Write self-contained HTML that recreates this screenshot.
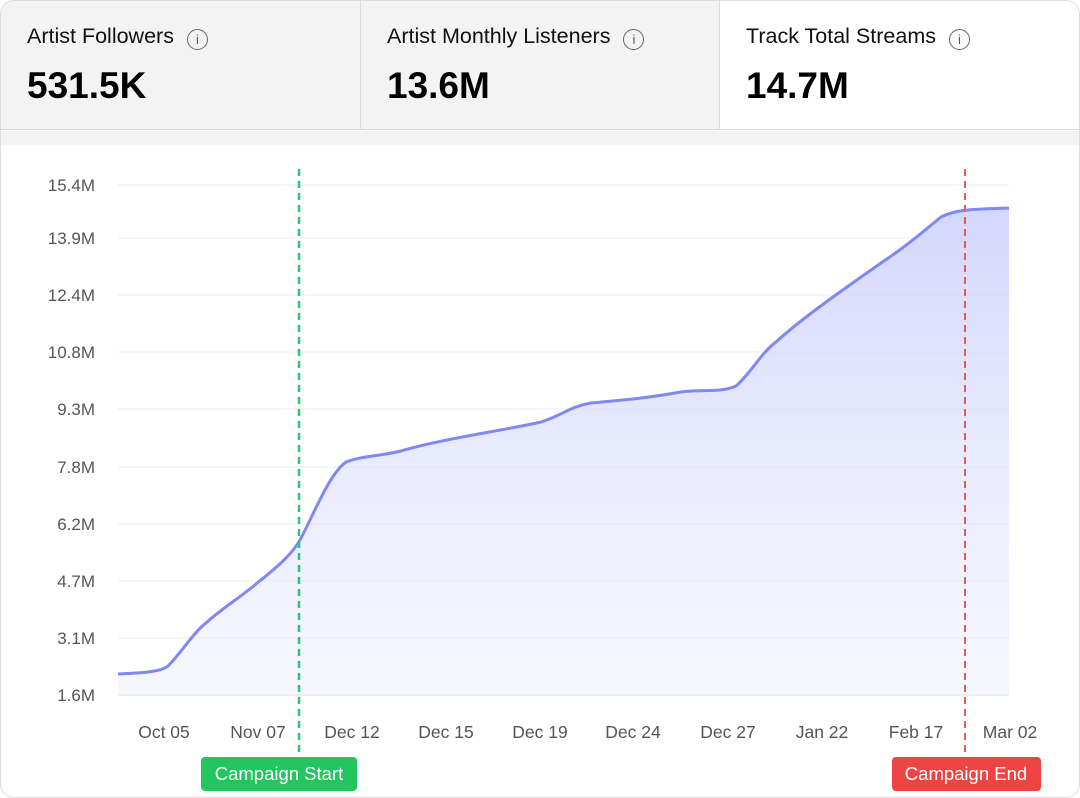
<!DOCTYPE html><html><head><style>
body{margin:0;width:1080px;height:798px;background:#fff;font-family:"Liberation Sans",sans-serif;overflow:hidden}
.card{position:absolute;left:0;top:0;width:1078px;height:796px;border:1px solid #ddd;border-radius:14px;overflow:hidden;background:#fff}
.tab{position:absolute;top:0;height:129px;background:#f3f3f3;border-right:1px solid #dcdcdc;border-bottom:1px solid #dcdcdc;box-sizing:border-box}
.tab .t{position:absolute;left:26px;top:23px;font-size:21.5px;color:#111}
.tab .t span{display:inline-block;width:19px;height:19px;border:1.5px solid #666;border-radius:50%;font-size:13px;text-align:center;line-height:19px;color:#555;margin-left:13px;vertical-align:-1px;font-family:"Liberation Sans",sans-serif}
.tab .v{position:absolute;left:26px;top:64px;font-size:37px;font-weight:bold;color:#000}
</style></head><body><div class="card">
<div class="tab" style="left:0;width:360px"><div class="t">Artist Followers<span>i</span></div><div class="v">531.5K</div></div>
<div class="tab" style="left:360px;width:359px"><div class="t">Artist Monthly Listeners<span>i</span></div><div class="v">13.6M</div></div>
<div class="tab" style="left:719px;width:361px;background:#fff;border-right:none"><div class="t">Track Total Streams<span>i</span></div><div class="v">14.7M</div></div>
<div style="position:absolute;left:0;top:130px;width:1080px;height:14px;background:#f3f3f3"></div>
<svg width="1080" height="798" style="position:absolute;left:0;top:0" font-family="Liberation Sans" font-size="17" fill="#555">
<defs><linearGradient id="g" x1="0" y1="0" x2="0" y2="1"><stop offset="0" stop-color="#c9cdfb" stop-opacity=".8"/><stop offset="1" stop-color="#eef0fe" stop-opacity=".5"/></linearGradient></defs>
<g stroke="#ececec" stroke-width="1">
<line x1="117" y1="184" x2="1008" y2="184"/><line x1="117" y1="237" x2="1008" y2="237"/><line x1="117" y1="294" x2="1008" y2="294"/><line x1="117" y1="351" x2="1008" y2="351"/><line x1="117" y1="408" x2="1008" y2="408"/><line x1="117" y1="466" x2="1008" y2="466"/><line x1="117" y1="523" x2="1008" y2="523"/><line x1="117" y1="580" x2="1008" y2="580"/><line x1="117" y1="637" x2="1008" y2="637"/><line x1="117" y1="694" x2="1008" y2="694" stroke="#ddd"/></g>
<g text-anchor="end"><text x="94" y="190">15.4M</text><text x="94" y="243">13.9M</text><text x="94" y="300">12.4M</text><text x="94" y="357">10.8M</text><text x="94" y="414">9.3M</text><text x="94" y="472">7.8M</text><text x="94" y="529">6.2M</text><text x="94" y="586">4.7M</text><text x="94" y="643">3.1M</text><text x="94" y="700">1.6M</text></g>
<path d="M117,673 C140,672 160,671 167,665 C180,652 192,632 205,622 C220,608 240,596 255,583 C275,567 292,553 300,537 C312,515 328,473 345,461 C360,455 380,455 400,450 C440,438 500,430 540,421 C560,415 570,405 590,402 C620,399 640,398 680,391 C700,388 720,392 735,385 C750,372 760,352 775,341 C800,318 840,290 880,262 C910,242 925,228 940,216 C955,208 975,208 1008,207 L1008,694 L117,694Z" fill="url(#g)"/>
<path d="M117,673 C140,672 160,671 167,665 C180,652 192,632 205,622 C220,608 240,596 255,583 C275,567 292,553 300,537 C312,515 328,473 345,461 C360,455 380,455 400,450 C440,438 500,430 540,421 C560,415 570,405 590,402 C620,399 640,398 680,391 C700,388 720,392 735,385 C750,372 760,352 775,341 C800,318 840,290 880,262 C910,242 925,228 940,216 C955,208 975,208 1008,207" fill="none" stroke="#8088f2" stroke-width="3"/>
<line x1="298" y1="168" x2="298" y2="752" stroke="#2cc47a" stroke-width="2.5" stroke-dasharray="7,5"/>
<line x1="964" y1="168" x2="964" y2="752" stroke="#e45b5b" stroke-width="2" stroke-dasharray="7,5"/>
<g text-anchor="middle" font-size="17.5"><text x="163" y="737">Oct 05</text><text x="257" y="737">Nov 07</text><text x="351" y="737">Dec 12</text><text x="445" y="737">Dec 15</text><text x="539" y="737">Dec 19</text><text x="632" y="737">Dec 24</text><text x="727" y="737">Dec 27</text><text x="821" y="737">Jan 22</text><text x="915" y="737">Feb 17</text><text x="1009" y="737">Mar 02</text></g>
<rect x="200" y="756" width="156" height="34" rx="4" fill="#22c55e"/><text x="278" y="779" fill="#fff" text-anchor="middle" font-size="18.5">Campaign Start</text>
<rect x="891" y="756" width="149" height="34" rx="4" fill="#ef4444"/><text x="965" y="779" fill="#fff" text-anchor="middle" font-size="18.5">Campaign End</text>
</svg></div></body></html>
